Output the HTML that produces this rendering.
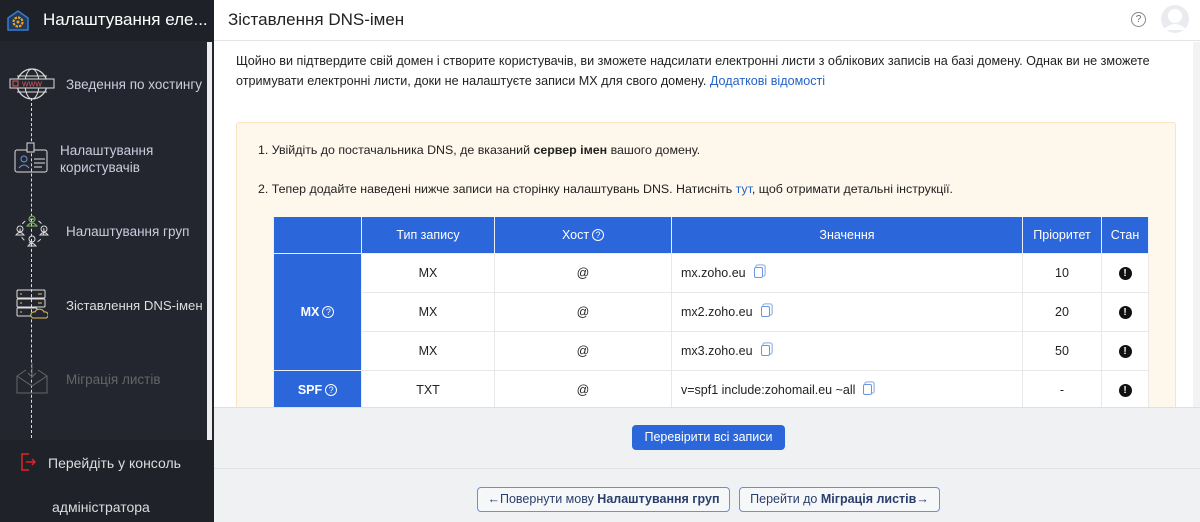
<!DOCTYPE html>
<html><head><meta charset="utf-8"><style>
*{box-sizing:border-box;margin:0;padding:0}
body{width:1200px;height:522px;overflow:hidden;font-family:"Liberation Sans","DejaVu Sans",sans-serif;background:#fff;position:relative;color:#222}
.sb{position:absolute;left:0;top:0;width:214px;height:522px;background:#23262f;overflow:hidden}
.sbh{position:absolute;left:0;top:0;width:214px;height:41px;background:#1e2128;color:#fff;font-size:17px}
.sbh span{position:absolute;left:43px;top:10px}
.item{position:absolute;color:#ccd;font-size:13.5px;white-space:nowrap}
.line{position:absolute;left:31px;top:98px;height:340px;border-left:1.5px dashed #ddd}
.scr{position:absolute;left:207px;top:42px;width:5px;height:398px;background:#eee}
.bot{position:absolute;left:0;top:440px;width:214px;height:82px;background:#1f2229;color:#ddd;font-size:14px}
.hdr{position:absolute;left:214px;top:0;width:986px;height:41px;border-bottom:1px solid #e3e4e7;background:#fff}
.hdr .t{position:absolute;left:14px;top:10px;font-size:17px;color:#222}
.intro{position:absolute;left:236px;top:52px;width:940px;font-size:12.6px;line-height:19.5px;color:#222}
a{color:#2563c8;text-decoration:none}
.box{position:absolute;left:236px;top:122px;width:940px;height:300px;background:#fdf7ec;border:1px solid #fbe3c1;border-radius:3px}
.s{position:absolute;left:258px;font-size:12.4px;color:#222}
table{position:absolute;left:273px;top:217px;border-collapse:collapse;font-size:12.5px}
td,th{border:1px solid #e8e8e8;text-align:center;height:39px;background:#fff}
th{background:#2b66db;color:#fff;font-weight:normal;height:36px;border:1px solid #e8eefb;border-top:none}
td.b{background:#2b66db;color:#fff;font-weight:bold;border-color:#e8eefb}
td.v{text-align:left;padding-left:9px}
.cp{display:inline-block;width:9px;height:11px;border:1.3px solid #6a96e0;border-radius:2px;margin-left:8px;vertical-align:-1px;box-shadow:2px -2px 0 -0.5px #fff,2px -2px 0 0.8px #9bb8ea}
.q{display:inline-block;width:12px;height:12px;border:1px solid currentColor;border-radius:50%;font-size:9px;line-height:10px;text-align:center;font-weight:normal;vertical-align:1px;margin-left:3px}
.ex{display:inline-block;width:13px;height:13px;border-radius:50%;background:#111;color:#fff;font-size:10px;line-height:13px;font-weight:bold}
.gray{position:absolute;left:214px;top:407px;width:986px;height:115px;background:#f0f1f3;border-top:1px solid #e0e0e3}
.gl{position:absolute;left:214px;top:468px;width:986px;border-top:1px solid #e0e1e4}
.btn{position:absolute;left:632px;top:425px;width:153px;height:25px;background:#2b66db;color:#fff;border-radius:4px;font-size:12.5px;text-align:center;line-height:25px}
.ob{position:absolute;top:487px;height:25px;border:1px solid #6b8fd8;border-radius:4px;background:#f6f7f9;color:#2a3e6c;font-size:12.5px;text-align:center;line-height:23px}
.vs{position:absolute;left:1193px;top:42px;width:7px;height:365px;background:#f3f3f3}
</style></head><body>
<div class="sb">
 <div class="sbh">
  <svg style="position:absolute;left:6px;top:9px" width="24" height="22" viewBox="0 0 24 22"><path d="M2 9 L12 2 L22 9 V21 H2Z" fill="#1e3a5c" stroke="#3a7bd5" stroke-width="1.5"/><circle cx="12" cy="13" r="4.5" fill="none" stroke="#f0a020" stroke-width="2.2" stroke-dasharray="2.5 1"/><circle cx="12" cy="13" r="1.5" fill="#f0a020"/></svg>
  <span>Налаштування еле...</span></div>
 <div class="line"></div>
 <svg style="position:absolute;left:9px;top:68px" width="46" height="32" viewBox="0 0 46 32"><circle cx="23" cy="16" r="15" fill="none" stroke="#ddd" stroke-width="1.2"/><ellipse cx="23" cy="16" rx="7" ry="15" fill="none" stroke="#ddd"/><path d="M8 8h30M8 24h30" stroke="#ddd"/><rect x="1" y="11" width="44" height="9" fill="#23262f" stroke="#ddd"/><rect x="4" y="13" width="5" height="5" fill="none" stroke="#e05a5a"/><text x="13" y="18.5" font-size="7" fill="#e05a5a" font-family="Liberation Sans">WWW</text></svg>
 <div class="item" style="left:66px;top:77px">Зведення по хостингу</div>
 <svg style="position:absolute;left:14px;top:142px" width="34" height="32" viewBox="0 0 34 32"><rect x="1" y="8" width="32" height="22" rx="2" fill="none" stroke="#ddd"/><rect x="13" y="1" width="7" height="9" fill="#23262f" stroke="#ddd"/><circle cx="10" cy="17" r="3" fill="none" stroke="#6a96e0"/><path d="M5 26 q5-6 10 0" fill="none" stroke="#6a96e0"/><path d="M20 17h11M20 21h11M20 25h8" stroke="#ddd"/></svg>
 <div class="item" style="left:60px;top:142px;line-height:17px">Налаштування<br>користувачів</div>
 <svg style="position:absolute;left:15px;top:214px" width="34" height="34" viewBox="0 0 34 34"><circle cx="17" cy="5" r="3" fill="none" stroke="#7fbf5a"/><path d="M12 12 q5-6 10 0z" fill="none" stroke="#7fbf5a"/><circle cx="5" cy="15" r="3" fill="none" stroke="#ddd"/><path d="M1 21 q4-5 8 0z" fill="none" stroke="#ddd"/><circle cx="29" cy="15" r="3" fill="none" stroke="#ddd"/><path d="M25 21 q4-5 8 0z" fill="none" stroke="#ddd"/><circle cx="17" cy="25" r="3" fill="none" stroke="#ddd"/><path d="M13 32 q4-5 8 0z" fill="none" stroke="#ddd"/><circle cx="17" cy="17" r="12" fill="none" stroke="#ddd" stroke-dasharray="4 5"/></svg>
 <div class="item" style="left:66px;top:224px">Налаштування груп</div>
 <svg style="position:absolute;left:16px;top:288px" width="32" height="32" viewBox="0 0 32 32"><rect x="1" y="2" width="28" height="8" rx="1" fill="none" stroke="#ddd"/><rect x="1" y="11" width="28" height="8" rx="1" fill="none" stroke="#ddd"/><rect x="1" y="20" width="20" height="8" rx="1" fill="none" stroke="#ddd"/><path d="M4 6h2M4 15h2M4 24h2M22 6h4M22 15h4" stroke="#e6c35a"/><path d="M17 30 h13 a3 3 0 0 0 -2 -6 a5 5 0 0 0 -9 0 a3 3 0 0 0 -2 6z" fill="#23262f" stroke="#e6c35a"/></svg>
 <div class="item" style="left:66px;top:298px;color:#ddd;font-size:13.2px">Зіставлення DNS-імен</div>
 <svg style="position:absolute;left:16px;top:362px" width="32" height="32" viewBox="0 0 32 32"><path d="M1 14 L10 8 M22 8 L31 14 V31 H1 V14 M1 14 L16 24 L31 14" fill="none" stroke="#666"/><path d="M16 1 v14 m-4 -4 l4 4 l4-4" fill="none" stroke="#666"/></svg>
 <div class="item" style="left:66px;top:372px;color:#666">Міграція листів</div>
 <div class="scr"></div>
 <div class="bot">
  <svg style="position:absolute;left:20px;top:13px" width="16" height="18" viewBox="0 0 16 18"><path d="M9 1 H2 V17 H9 M6 9 H15 M12 6 L15 9 L12 12" fill="none" stroke="#e02424" stroke-width="1.5"/></svg>
  <div style="position:absolute;left:48px;top:15px">Перейдіть у консоль</div>
  <div style="position:absolute;left:52px;top:59px">адміністратора</div>
 </div>
</div>
<div class="hdr"><div class="t">Зіставлення DNS-імен</div>
 <div style="position:absolute;left:917px;top:12px;width:15px;height:15px;border:1px solid #888;border-radius:50%;font-size:10px;text-align:center;line-height:13px;color:#666">?</div>
 <svg style="position:absolute;left:946px;top:4px" width="30" height="32" viewBox="0 0 30 32"><circle cx="15" cy="15" r="14" fill="#e9ebef"/><circle cx="15" cy="12" r="7" fill="#fff"/><path d="M3 26 q12-12 24 0" fill="#fff"/></svg>
</div>
<div class="intro">Щойно ви підтвердите свій домен і створите користувачів, ви зможете надсилати електронні листи з облікових записів на базі домену. Однак ви не зможете отримувати електронні листи, доки не налаштуєте записи MX для свого домену. <a>Додаткові відомості</a></div>
<div class="box"></div>
<div class="s" style="top:143px">1. Увійдіть до постачальника DNS, де вказаний <b>сервер імен</b> вашого домену.</div>
<div class="s" style="top:182px">2. Тепер додайте наведені нижче записи на сторінку налаштувань DNS. Натисніть <a>тут</a>, щоб отримати детальні інструкції.</div>
<table>
<tr><th style="width:88px"></th><th style="width:133px">Тип запису</th><th style="width:177px">Хост<span class="q">?</span></th><th style="width:351px">Значення</th><th style="width:79px">Пріоритет</th><th style="width:47px">Стан</th></tr>
<tr><td class="b" rowspan="3">MX<span class="q">?</span></td><td>MX</td><td>@</td><td class="v">mx.zoho.eu<span class="cp"></span></td><td>10</td><td><span class="ex">!</span></td></tr>
<tr><td>MX</td><td>@</td><td class="v">mx2.zoho.eu<span class="cp"></span></td><td>20</td><td><span class="ex">!</span></td></tr>
<tr><td>MX</td><td>@</td><td class="v">mx3.zoho.eu<span class="cp"></span></td><td>50</td><td><span class="ex">!</span></td></tr>
<tr><td class="b">SPF<span class="q">?</span></td><td>TXT</td><td>@</td><td class="v">v=spf1 include:zohomail.eu ~all<span class="cp"></span></td><td>-</td><td><span class="ex">!</span></td></tr>
</table>
<div class="vs"></div>
<div class="gray"></div>
<div class="gl"></div>
<div class="btn">Перевірити всі записи</div>
<div class="ob" style="left:477px;width:253px">←Повернути мову <b>Налаштування груп</b></div>
<div class="ob" style="left:739px;width:201px">Перейти до <b>Міграція листів</b>→</div>
</body></html>
